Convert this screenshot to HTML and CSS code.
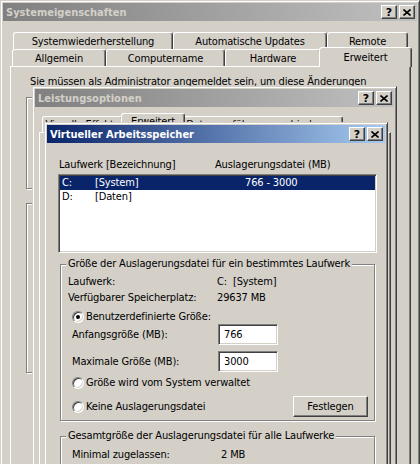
FILE: index.html
```html
<!DOCTYPE html>
<html lang="de">
<head>
<meta charset="utf-8">
<title>Virtueller Arbeitsspeicher</title>
<link rel="stylesheet" href="styles.css">
</head>
<body>
<div class="desk">

  <section class="win win-sys">
    <header class="title inactive">
      <span class="title-text">Systemeigenschaften</span>
      <span class="tbtns">
        <span class="tbtn">?</span>
        <span class="tbtn"><svg width="8" height="7" viewBox="0 0 8 7"><path d="M0.5 0.5L7.5 6.5M7.5 0.5L0.5 6.5" stroke="#000" stroke-width="1.6"/></svg></span>
      </span>
    </header>
    <div class="tabs sys-tabs">
      <div class="tabrow sys-row1">
        <div class="tab t-sysw">Systemwiederherstellung</div>
        <div class="tab t-auto">Automatische Updates</div>
        <div class="tab t-remote">Remote</div>
      </div>
      <div class="tabrow sys-row2">
        <div class="tab t-allg">Allgemein</div>
        <div class="tab t-comp">Computername</div>
        <div class="tab t-hw">Hardware</div>
        <div class="tab sel t-erw">Erweitert</div>
      </div>
    </div>
    <div class="panel sys-panel">
      <p class="note">Sie müssen als Administrator angemeldet sein, um diese Änderungen</p>
      <div class="etch sys-g1"></div>
      <div class="etch sys-g2"></div>
    </div>
  </section>

  <section class="win win-perf">
    <header class="title inactive">
      <span class="title-text">Leistungsoptionen</span>
      <span class="tbtns">
        <span class="tbtn">?</span>
        <span class="tbtn"><svg width="8" height="7" viewBox="0 0 8 7"><path d="M0.5 0.5L7.5 6.5M7.5 0.5L0.5 6.5" stroke="#000" stroke-width="1.6"/></svg></span>
      </span>
    </header>
    <div class="tabrow perf-row">
      <div class="tab t-vis">Visuelle Effekte</div>
      <div class="tab sel t-perw">Erweitert</div>
      <div class="tab t-dep">Datenausführungsverhinderung</div>
    </div>
    <div class="panel perf-panel"></div>
  </section>

  <section class="win win-vm">
    <header class="title active">
      <span class="title-text">Virtueller Arbeitsspeicher</span>
      <span class="tbtns">
        <span class="tbtn">?</span>
        <span class="tbtn"><svg width="8" height="7" viewBox="0 0 8 7"><path d="M0.5 0.5L7.5 6.5M7.5 0.5L0.5 6.5" stroke="#000" stroke-width="1.6"/></svg></span>
      </span>
    </header>
    <div class="vm-body">
      <div class="lb-head"><span class="h-drive">Laufwerk [Bezeichnung]</span><span>Auslagerungsdatei (MB)</span></div>
      <div class="listbox">
        <div class="lb-row selected"><span class="c1">C:</span><span class="c2">[System]</span><span class="c3">766 - 3000</span></div>
        <div class="lb-row"><span class="c1">D:</span><span class="c2">[Daten]</span></div>
      </div>

      <div class="group g-drive">
        <div class="group-title">Größe der Auslagerungsdatei für ein bestimmtes Laufwerk</div>
        <div class="kv r1"><span class="k">Laufwerk:</span><span>C:&nbsp; [System]</span></div>
        <div class="kv r2"><span class="k">Verfügbarer Speicherplatz:</span><span>29637 MB</span></div>
        <label class="radio-row r3"><span class="radio checked"></span><span>Benutzerdefinierte Größe:</span></label>
        <div class="field-row r4"><span class="fl">Anfangsgröße (MB):</span><span class="input">766</span></div>
        <div class="field-row r5"><span class="fl">Maximale Größe (MB):</span><span class="input">3000</span></div>
        <label class="radio-row r6"><span class="radio"></span><span>Größe wird vom System verwaltet</span></label>
        <div class="radio-row r7"><span class="radio"></span><span>Keine Auslagerungsdatei</span><span class="button">Festlegen</span></div>
      </div>

      <div class="group g-total">
        <div class="group-title">Gesamtgröße der Auslagerungsdatei für alle Laufwerke</div>
        <div class="kv t1"><span class="k2">Minimal zugelassen:</span><span>2 MB</span></div>
      </div>
    </div>
  </section>

</div>
</body>
</html>
```

FILE: styles.css
```css
* { box-sizing: border-box; }
html, body { margin: 0; padding: 0; }
body {
  width: 420px;
  height: 464px;
  overflow: hidden;
  background: #3a6ea5;
  font-family: "DejaVu Sans Condensed", "DejaVu Sans", sans-serif;
  font-size: 11px;
  line-height: 13px;
  letter-spacing: -0.15px;
  color: #000;
}
.desk { position: relative; width: 420px; height: 464px; overflow: hidden; }

/* classic window */
.win {
  position: absolute;
  background: #d4d0c8;
  border: 1px solid;
  border-color: #d4d0c8 #404040 #404040 #d4d0c8;
  box-shadow: inset 1px 1px #fff, inset -1px -1px #808080;
  padding: 2px;
}
.win-sys { left: 0; top: 0; width: 420px; height: 500px; z-index: 1; }
.win-perf { left: 32px; top: 86px; width: 365px; height: 420px; z-index: 2; }
.win-vm { left: 44px; top: 122px; width: 344px; height: 400px; z-index: 3; }

.title {
  height: 18px;
  display: flex;
  align-items: center;
  justify-content: space-between;
  padding: 0 2px 0 3px;
  font-weight: bold;
  letter-spacing: 0;
  white-space: nowrap;
}
.title.inactive { background: linear-gradient(to right, #808080, #c0c0c0); color: #d4d0c8; }
.title.active { background: linear-gradient(to right, #0a246a, #a6caf0); color: #fff; }
.tbtns { display: flex; gap: 2px; }
.tbtn {
  width: 16px;
  height: 14px;
  background: #d4d0c8;
  border: 1px solid;
  border-color: #fff #404040 #404040 #fff;
  box-shadow: inset -1px -1px #808080;
  display: flex;
  align-items: center;
  justify-content: center;
  color: #000;
  font-family: "DejaVu Sans", sans-serif;
  font-weight: bold;
  font-size: 11px;
  line-height: 11px;
}

/* tabs */
.tabrow { display: flex; }
.tab {
  height: 17px;
  border: 1px solid;
  border-bottom: 0;
  border-color: #fff #404040 #404040 #fff;
  box-shadow: inset -1px 0 #808080;
  border-radius: 3px 3px 0 0;
  background: #d4d0c8;
  text-align: center;
  padding-top: 2px;
  white-space: nowrap;
  overflow: hidden;
}
.tab.sel { position: relative; z-index: 2; }

.sys-tabs { margin-top: 11px; }
.sys-row1 { margin-left: 10px; height: 17px; }
.sys-row2 { margin-left: 9px; height: 17px; }
.t-sysw { width: 160px; }
.t-auto { width: 154px; }
.t-remote { width: 81px; }
.t-allg { width: 94px; }
.t-comp { width: 119px; }
.t-hw { width: 96px; }
.t-erw { width: 93px; height: 20px; margin: -2px -2px -1px -2px; padding-top: 3px; }

.panel {
  border: 1px solid;
  border-color: #fff #404040 #404040 #fff;
  box-shadow: inset -1px -1px #808080;
  background: #d4d0c8;
}
.sys-panel { margin-left: 7px; width: 401px; height: 420px; padding: 8px 0 0 19px; }
.note { margin: 0; white-space: nowrap; }

.etch {
  border: 1px solid #808080;
  box-shadow: 1px 1px 0 #fff, inset 1px 1px 0 #fff;
  margin-left: -4px;
  width: 370px;
}
.sys-g1 { margin-top: 9px; height: 92px; }
.sys-g2 { margin-top: 14px; height: 170px; }

.perf-row { margin: 9px 0 0 7px; height: 16px; }
.perf-row .tab { height: 16px; padding-top: 1px; }
.t-vis { width: 81px; }
.t-perw { width: 64px; margin: -3px -2px -1px -2px; height: 20px !important; }
.t-dep { width: 160px; }
.perf-panel { margin-left: 4px; width: 352px; height: 360px; }

/* VM dialog body */
.vm-body { padding-left: 11px; }
.lb-head { margin-top: 15px; padding-left: 1px; display: flex; white-space: nowrap; }
.h-drive { width: 156px; }
.listbox {
  margin-top: 3px;
  width: 319px;
  height: 79px;
  background: #fff;
  border: 1px solid;
  border-color: #808080 #fff #fff #808080;
  box-shadow: inset 1px 1px #404040, inset -1px -1px #d4d0c8;
  padding: 1px;
}
.lb-row { display: flex; height: 14px; line-height: 14px; white-space: nowrap; }
.lb-row.selected { background: #0a246a; color: #fff; }
.c1 { width: 35px; padding-left: 2px; }
.c2 { width: 150px; }

.group {
  position: relative;
  margin-left: 2px;
  width: 315px;
  border: 1px solid #808080;
  box-shadow: 1px 1px 0 #fff, inset 1px 1px 0 #fff;
}
.group-title {
  position: absolute;
  left: 5px;
  top: -8px;
  padding: 0 2px;
  background: #d4d0c8;
  white-space: nowrap;
}
.g-drive { margin-top: 11px; height: 157px; padding: 10px 0 0 7px; }
.g-total { margin-top: 15px; height: 60px; padding: 11px 0 0 11px; }

.kv { display: flex; white-space: nowrap; }
.k { width: 149px; }
.k2 { width: 149px; }
.r2 { margin-top: 3px; }
.radio-row { display: flex; align-items: center; margin-left: 4px; white-space: nowrap; }
.r3 { margin-top: 6px; }
.r6 { margin-top: 4px; }
.r7 { margin-top: 7px; height: 21px; }
.radio {
  width: 12px;
  height: 12px;
  margin-right: 2px;
  border-radius: 50%;
  background: #fff;
  border: 1px solid;
  border-color: #808080 #fff #fff #808080;
  box-shadow: inset 1px 1px #404040, inset -1px -1px #d4d0c8;
  display: flex;
  align-items: center;
  justify-content: center;
  flex: none;
}
.radio.checked::after { content: ""; width: 4px; height: 4px; border-radius: 50%; background: #000; }

.field-row { display: flex; align-items: center; height: 21px; padding-left: 4px; white-space: nowrap; }
.r4 { margin-top: 1px; }
.r5 { margin-top: 6px; }
.fl { width: 146px; }
.input {
  width: 60px;
  height: 21px;
  background: #fff;
  border: 1px solid;
  border-color: #808080 #fff #fff #808080;
  box-shadow: inset 1px 1px #404040, inset -1px -1px #d4d0c8;
  padding: 3px 0 0 5px;
}
.button {
  margin-left: auto;
  margin-right: 6px;
  width: 75px;
  height: 21px;
  border: 1px solid;
  border-color: #fff #404040 #404040 #fff;
  box-shadow: inset -1px -1px #808080;
  text-align: center;
  padding-top: 3px;
}
```
